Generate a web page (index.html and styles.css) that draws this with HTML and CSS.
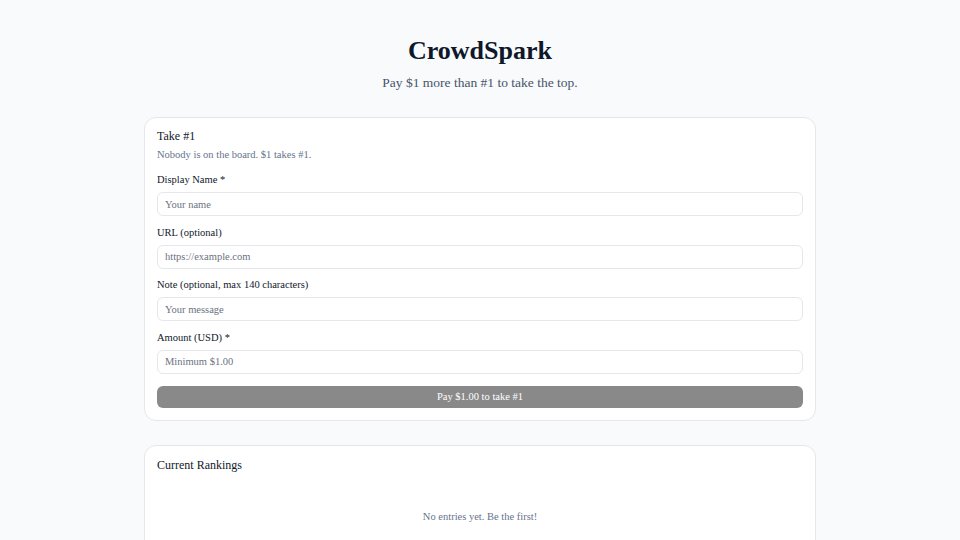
FILE: index.html
```html
<!DOCTYPE html>
<html lang="en">
<head>
<meta charset="utf-8">
<title>CrowdSpark</title>
<link rel="stylesheet" href="styles.css">
</head>
<body>
<main class="page">
  <header class="hero">
    <h1 class="title">CrowdSpark</h1>
    <p class="subtitle">Pay $1 more than #1 to take the top.</p>
  </header>

  <section class="card">
    <h2 class="card-title">Take #1</h2>
    <p class="card-desc">Nobody is on the board. $1 takes #1.</p>
    <form class="form">
      <div class="field">
        <label class="label">Display Name *</label>
        <input class="input" type="text" placeholder="Your name">
      </div>
      <div class="field">
        <label class="label">URL (optional)</label>
        <input class="input" type="text" placeholder="https://example.com">
      </div>
      <div class="field">
        <label class="label">Note (optional, max 140 characters)</label>
        <input class="input" type="text" placeholder="Your message">
      </div>
      <div class="field">
        <label class="label">Amount (USD) *</label>
        <input class="input" type="text" placeholder="Minimum $1.00">
      </div>
      <button class="btn" type="button">Pay $1.00 to take #1</button>
    </form>
  </section>

  <section class="card card-rank">
    <h2 class="card-title">Current Rankings</h2>
    <p class="empty">No entries yet. Be the first!</p>
  </section>
</main>
</body>
</html>
```

FILE: styles.css
```css
* { box-sizing: border-box; }
html, body {
  margin: 0;
  padding: 0;
  background: #f8fafc;
  font-family: "Liberation Serif", "Times New Roman", serif;
  color: #0f172a;
}
.page {
  width: 672px;
  margin: 0 auto;
  padding-top: 35px;
  display: flex;
  flex-direction: column;
  gap: 24px;
}
.hero {
  text-align: center;
  margin-bottom: 1px;
}
.title {
  margin: 0;
  font-size: 26px;
  line-height: 32px;
  font-weight: 700;
  color: #0f172a;
}
.subtitle {
  margin: 7px 0 0;
  font-size: 13.5px;
  line-height: 18px;
  color: #475569;
}
.card {
  background: #ffffff;
  border: 1px solid #e5e7eb;
  border-radius: 12px;
  padding: 10px 12px 12px;
}
.card-title {
  margin: 0;
  font-size: 12px;
  line-height: 16px;
  font-weight: 400;
  color: #0f172a;
}
.card-desc {
  margin: 4px 0 0;
  font-size: 10.5px;
  line-height: 14px;
  color: #64748b;
}
.form {
  margin-top: 11px;
  display: flex;
  flex-direction: column;
  gap: 9.5px;
}
.field {
  display: flex;
  flex-direction: column;
  gap: 5px;
}
.label {
  font-size: 10.5px;
  line-height: 14px;
  color: #0f172a;
}
.input {
  height: 24px;
  width: 100%;
  border: 1px solid #e5e7eb;
  border-radius: 6px;
  padding: 0 7px;
  font-family: "Liberation Serif", "Times New Roman", serif;
  font-size: 10.5px;
  color: #0f172a;
  background: #ffffff;
}
.input::placeholder { color: #6b7280; }
.btn {
  margin-top: 2.5px;
  height: 22.5px;
  width: 100%;
  border: none;
  border-radius: 6px;
  background: #898989;
  color: #ffffff;
  font-family: "Liberation Serif", "Times New Roman", serif;
  font-size: 10.5px;
}
.card-rank {
  padding-top: 11px;
}
.empty {
  margin: 37px 0 0;
  text-align: center;
  font-size: 10.5px;
  line-height: 14px;
  color: #64748b;
  padding-bottom: 40px;
}
```
